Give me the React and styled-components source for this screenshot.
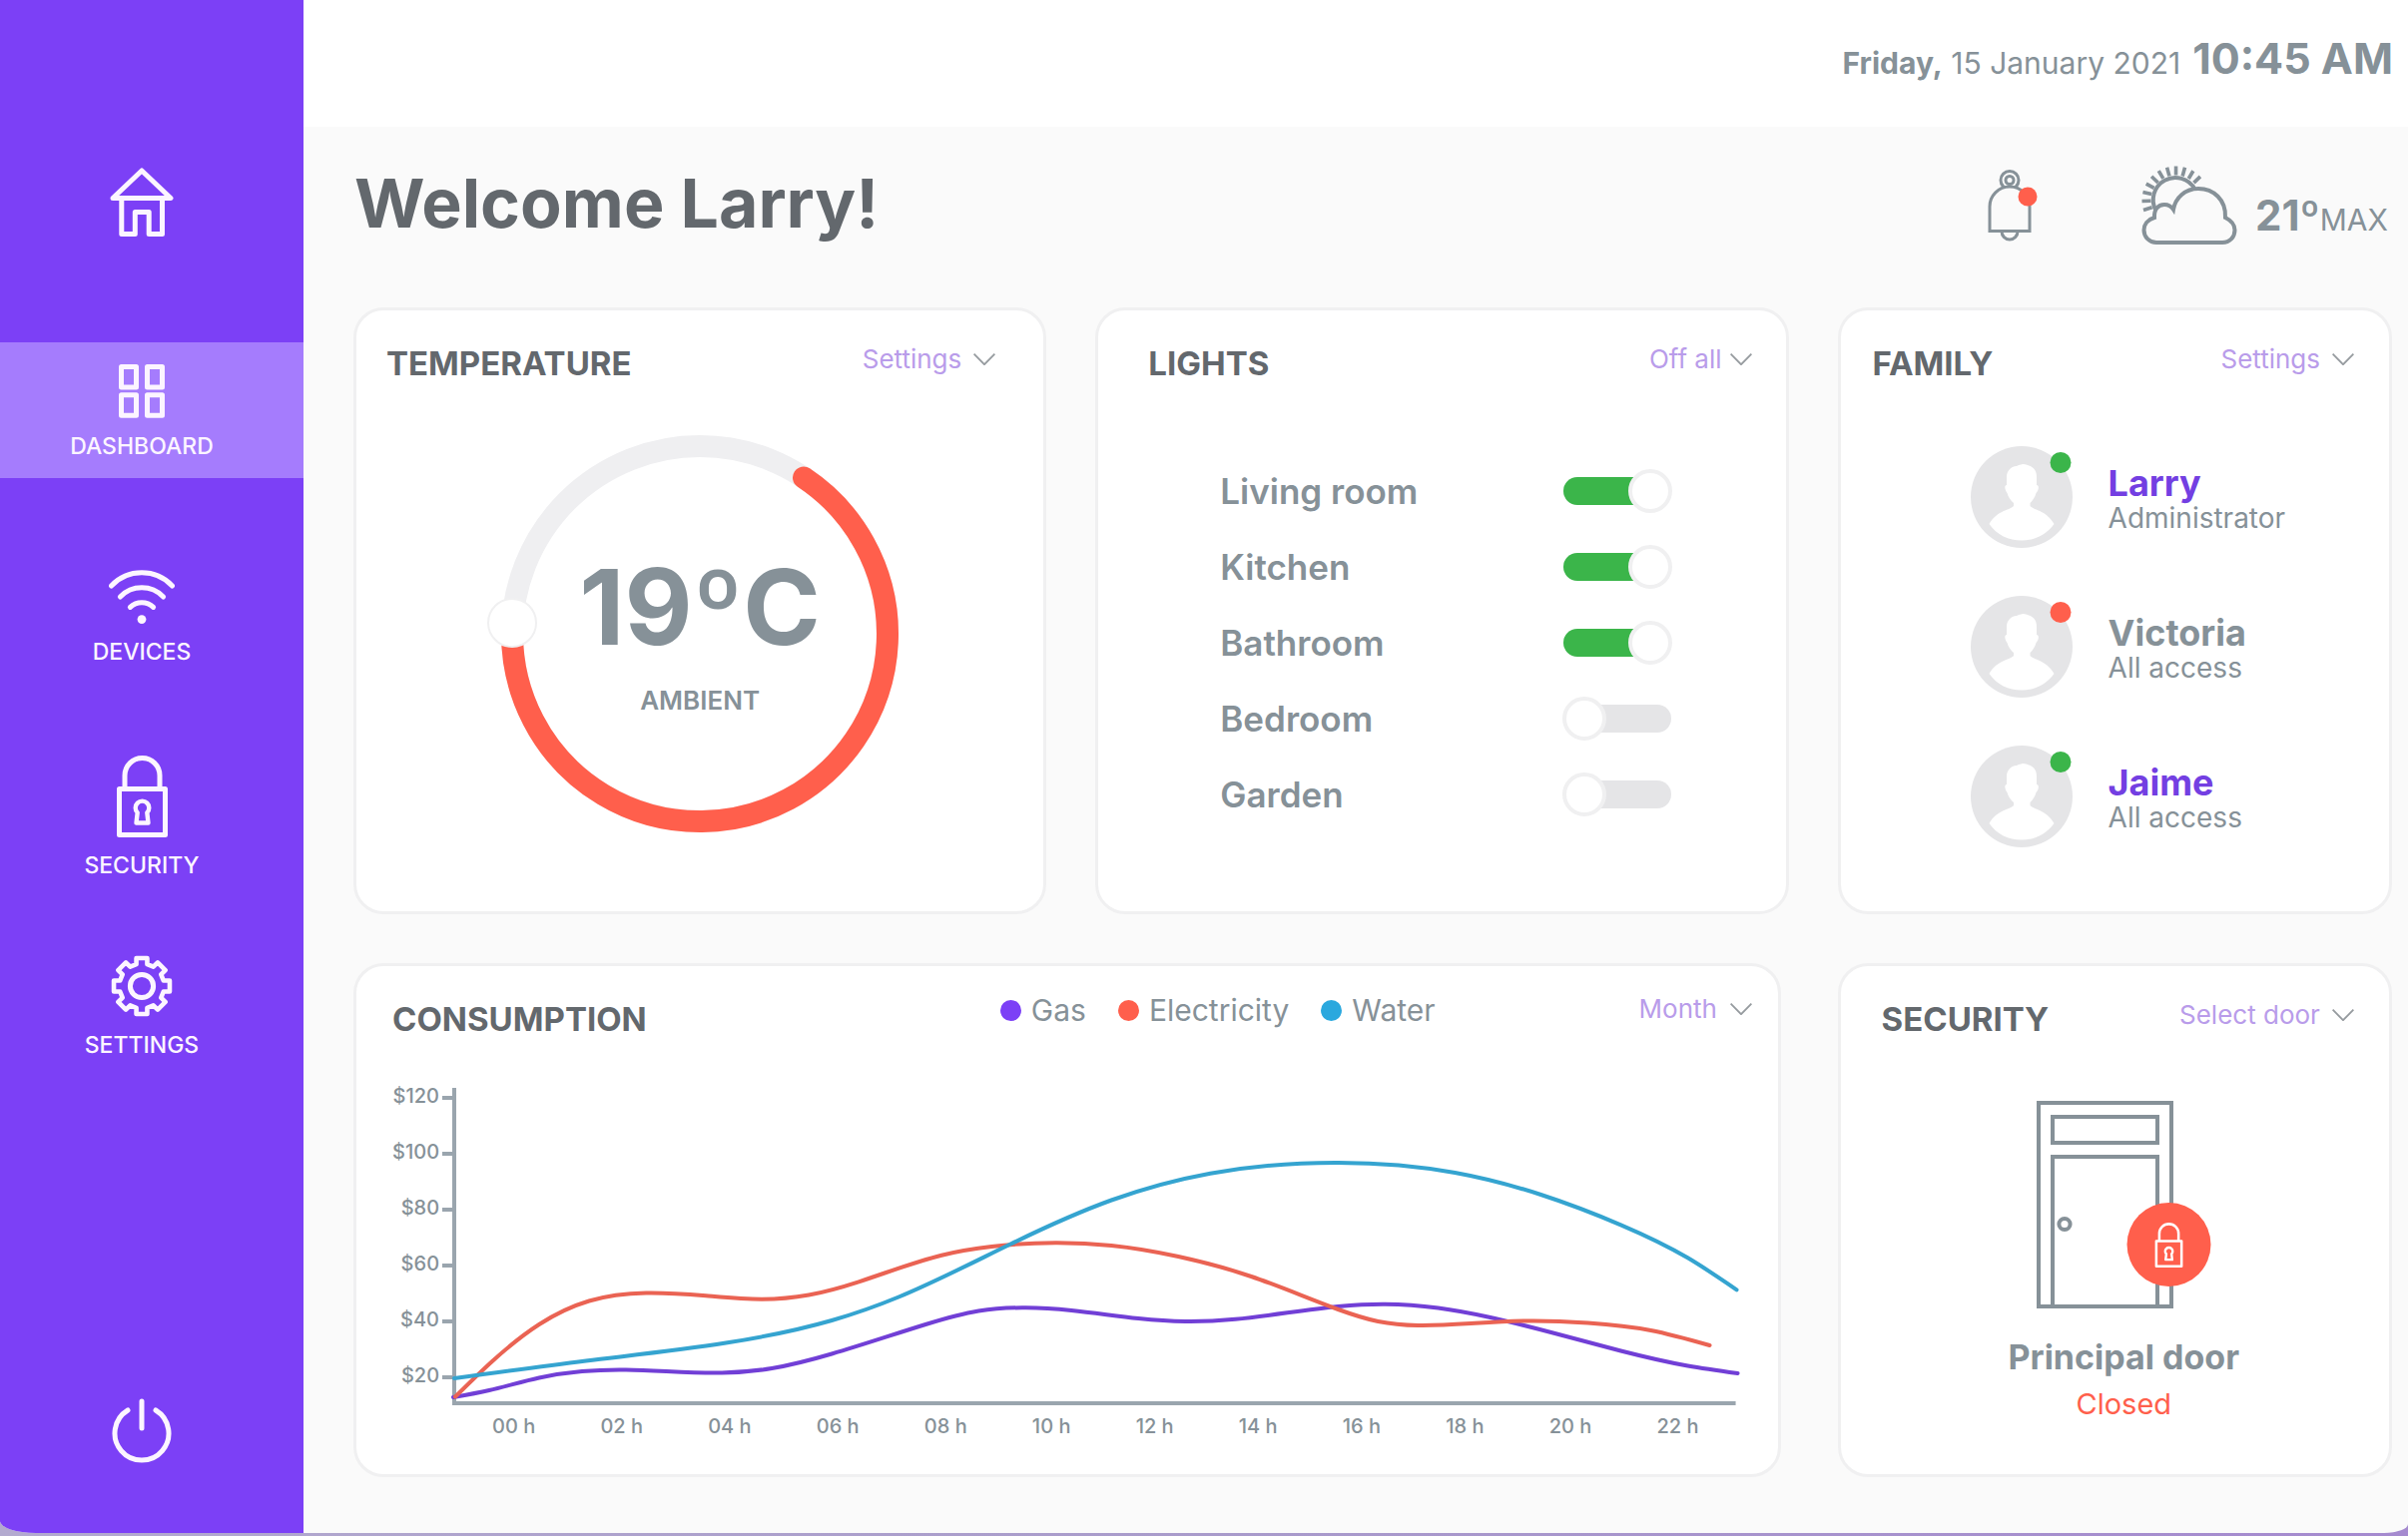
import React, { useState } from "react";
import styled, { createGlobalStyle } from "styled-components";

const color = {
  purple: "#7c40f6",
  purpleText: "#733fe2",
  active: "#a57cfd",
  link: "#b99cea",
  navText: "#fcf5ff",
  red: "#ff5f4c",
  green: "#3bb54a",
  blue: "#2aa8de",
  gray: "#869198",
  dark: "#63686d",
  axis: "#9aa5ae",
  line: "#f0f0f1",
  track: "#e5e5e7",
};

const Global = createGlobalStyle`
  *, *::before, *::after { box-sizing: border-box; }
  body {
    margin: 0;
    background: linear-gradient(90deg, #b3aacf 0%, #a99bcb 50%, #a58acf 100%);
    font-family: Inter, "Noto Sans", "Liberation Sans", sans-serif;
    color: ${color.gray};
  }
  h1, h2, h3, p, ul { margin: 0; padding: 0; }
  ul { list-style: none; }
  button, select, input { font: inherit; margin: 0; }
  svg { display: block; flex: none; }
`;

/* ---------- layout ---------- */

const Frame = styled.div`
  padding-bottom: 3px;
`;

const Shell = styled.div`
  display: flex;
  min-height: calc(100vh - 3px);
  overflow: hidden;
  background: #fafafa;
  border-radius: 0 0 24px 36px / 0 0 9px 12px;
`;

const Sidebar = styled.nav`
  flex: none;
  display: flex;
  flex-direction: column;
  width: 304px;
  padding: 146px 0 48px;
  background: ${color.purple};
`;

const NavItem = styled.a`
  display: flex;
  flex-direction: column;
  align-items: center;
  gap: 16px;
  margin-top: ${(p) => p.$gap || 0}px;
  padding: 22px 20px 20px 0;
  background: ${(p) => (p.$active ? color.active : "transparent")};
  color: ${color.navText};
  font-size: 23px;
  font-weight: 500;
  line-height: 24px;
  text-decoration: none;
`;

const PowerButton = styled.button`
  display: flex;
  justify-content: center;
  margin-top: auto;
  padding: 22px 20px 22px 0;
  border: 0;
  background: none;
  color: ${color.navText};
  cursor: pointer;
`;

const Page = styled.div`
  flex: 1;
  min-width: 0;
  display: flex;
  flex-direction: column;
`;

const TopBar = styled.header`
  display: flex;
  justify-content: flex-end;
  align-items: baseline;
  gap: 12px;
  height: 127px;
  padding: 32px 15px 0 50px;
  background: #ffffff;
  font-size: 30px;
  line-height: 52px;
`;

const Clock = styled.time`
  font-size: 43px;
  font-weight: 700;
`;

const Hero = styled.div`
  display: flex;
  align-items: center;
  height: 152px;
  margin-bottom: 29px;
  padding: 0 20px 0 51px;
`;

const Greeting = styled.h1`
  margin-right: auto;
  color: ${color.dark};
  font-size: 68px;
  font-weight: 700;
  line-height: 80px;
`;

const HeroTools = styled.div`
  display: flex;
  align-items: center;
  gap: 99px;
  padding-top: 6px;
`;

const BellButton = styled.button`
  padding: 4px;
  border: 0;
  background: none;
  cursor: pointer;
`;

const Weather = styled.div`
  display: flex;
  align-items: center;
  gap: 18px;
`;

const Forecast = styled.p`
  padding-top: 24px;
  font-size: 30px;
  line-height: 48px;

  b {
    font-size: 42px;
  }
`;

const Cards = styled.main`
  display: grid;
  grid-template-columns: 5fr 5fr 4fr;
  gap: 49px;
  padding: 0 16px 56px 50px;
`;

const Card = styled.section`
  min-width: 0;
  min-height: ${(p) => (p.$wide || p.$short ? 515 : 608)}px;
  grid-column: ${(p) => (p.$wide ? "span 2" : "auto")};
  margin-right: ${(p) => (p.$wide ? 8 : 0)}px;
  padding: 27px ${(p) => p.$right}px 24px ${(p) => p.$left}px;
  border: 3px solid ${color.line};
  border-radius: 30px;
  background: #ffffff;
`;

const CardHeader = styled.div`
  display: flex;
  align-items: flex-start;
  justify-content: space-between;
`;

const CardTitle = styled.h2`
  padding-top: 6px;
  color: ${color.dark};
  font-size: 33px;
  font-weight: 700;
  line-height: 40px;
`;

/* ---------- controls ---------- */

const MenuButton = styled.button`
  display: flex;
  align-items: center;
  gap: ${(p) => p.$gap || 12}px;
  margin-top: 6px;
  padding: 0;
  border: 0;
  background: none;
  color: ${color.link};
  font-size: 26px;
  line-height: 32px;
  cursor: pointer;
`;

const SelectWrap = styled.label`
  display: flex;
  align-items: center;
  gap: 12px;
  margin-top: ${(p) => (p.$raised ? 0 : 6)}px;
`;

const Select = styled.select`
  appearance: none;
  height: 32px;
  padding: 0;
  border: 0;
  background: none;
  color: ${color.link};
  font-size: 26px;
  line-height: 32px;
  cursor: pointer;
`;

const Toggle = styled.input.attrs({ type: "checkbox", role: "switch" })`
  appearance: none;
  position: relative;
  flex: none;
  width: 110px;
  height: 44px;
  cursor: pointer;

  &::before {
    content: "";
    position: absolute;
    inset: 8px 1px;
    border-radius: 14px;
    background: ${color.track};
  }

  &::after {
    content: "";
    position: absolute;
    top: 0;
    left: 0;
    width: 44px;
    height: 44px;
    border: 4px solid ${color.line};
    border-radius: 50%;
    background: #ffffff;
  }

  &:checked::before {
    background: ${color.green};
    right: 20px;
  }

  &:checked::after {
    left: auto;
    right: 0;
  }
`;

/* ---------- temperature ---------- */

const Dial = styled.div`
  position: relative;
  display: grid;
  place-items: center;
  margin: 52px -18px 0 0;

  > * {
    grid-area: 1 / 1;
  }
`;

const DialInput = styled.input.attrs({ type: "range" })`
  position: absolute;
  inset: 0;
  width: 100%;
  height: 100%;
  opacity: 0;
  cursor: pointer;
`;

const Reading = styled.div`
  display: flex;
  flex-direction: column;
  align-items: center;
  gap: 22px;
  font-size: 26px;
  font-weight: 600;
  line-height: 32px;
`;

const Degrees = styled.output`
  font-size: 105px;
  font-weight: 700;
  line-height: 112px;
`;

/* ---------- lights ---------- */

const LightList = styled.ul`
  margin-top: 70px;
  padding: 0 80px 0 72px;
`;

const LightRow = styled.li`
  display: flex;
  align-items: center;
  justify-content: space-between;
  height: 76px;
  font-size: 35px;
  font-weight: 600;
  line-height: 40px;
`;

/* ---------- family ---------- */

const People = styled.ul`
  display: flex;
  flex-direction: column;
  gap: 48px;
  margin-top: 63px;
  padding-left: 98px;
`;

const Person = styled.li`
  display: flex;
  align-items: center;
  gap: 36px;
`;

const PersonText = styled.div`
  padding-top: 4px;
  font-size: 28px;
  line-height: 32px;
`;

const PersonName = styled.h3`
  color: ${(p) => (p.$online ? color.purpleText : color.gray)};
  font-size: 36px;
  font-weight: 700;
  line-height: 38px;
`;

/* ---------- consumption ---------- */

const Legend = styled.ul`
  display: flex;
  gap: 32px;
  margin: 0 204px 0 auto;
`;

const LegendItem = styled.li`
  display: flex;
  align-items: center;
  gap: 10px;
  font-size: 30px;
  line-height: 34px;

  &::before {
    content: "";
    width: 21px;
    height: 21px;
    border-radius: 50%;
    background: ${(p) => p.$color};
  }
`;

const Chart = styled.div`
  display: grid;
  grid-template-columns: 46px 1fr;
  column-gap: 4px;
  margin-top: 29px;
  padding-right: 12px;
  font-size: 20px;
  font-weight: 500;
  line-height: 24px;
`;

const YLabels = styled.ul`
  display: grid;
  grid-auto-rows: 56px;
  align-items: center;
  justify-items: end;
`;

const Plot = styled.svg`
  width: 100%;
  height: 324px;
  margin-top: 17px;
  overflow: visible;
`;

const XLabels = styled.ul`
  grid-column: 2;
  display: flex;
  justify-content: space-between;
  padding: 6px 41px 0 50px;
`;

/* ---------- security ---------- */

const DoorStatus = styled.div`
  display: flex;
  flex-direction: column;
  align-items: center;
  margin-top: 62px;
  padding-left: 12px;
`;

const DoorName = styled.h3`
  margin-top: 29px;
  font-size: 34px;
  font-weight: 700;
  line-height: 40px;
`;

const DoorState = styled.p`
  margin-top: 11px;
  color: ${color.red};
  font-size: 29px;
  line-height: 32px;
`;

/* ---------- icons ---------- */

const Stroke = ({ w, h, width = 5, children }) => (
  <svg
    width={w}
    height={h}
    viewBox={`0 0 ${w} ${h}`}
    fill="none"
    stroke="currentColor"
    strokeWidth={width}
    strokeLinecap="round"
    strokeLinejoin="round"
    aria-hidden="true"
  >
    {children}
  </svg>
);

const HomeIcon = () => (
  <Stroke w={64} h={69}>
    <path d="M3 30.5 32 3l29 27.5Z" />
    <path d="M11.8 30.5v36h13.5v-22h13.9v22h13.3v-36" />
  </Stroke>
);

const GridIcon = () => (
  <Stroke w={46} h={54}>
    <rect x="2.5" y="2.5" width="15" height="20.5" />
    <rect x="28.5" y="2.5" width="15" height="20.5" />
    <rect x="2.5" y="30.8" width="15" height="20.5" />
    <rect x="28.5" y="30.8" width="15" height="20.5" />
  </Stroke>
);

const WifiIcon = () => (
  <Stroke w={66} h={54}>
    <path d="M2.5 16a42 42 0 0 1 61 0" />
    <path d="M11.4 27a30 30 0 0 1 43.2 0" />
    <path d="M21.4 37.4a16.5 16.5 0 0 1 23.2 0" />
    <circle cx="33" cy="49.6" r="4.4" fill="currentColor" stroke="none" />
  </Stroke>
);

const LockShape = () => (
  <>
    <path d="M8 33.500V20a17.5 17.500 0 0 1 35 0v13.500" />
    <rect x="2.5" y="33.500" width="46" height="46" />
    <path
      strokeWidth="4.400"
      d="M19.500 67.500h12l-1.200-10.300a6.800 6.800 0 1 0-9.600 0Z"
    />
  </>
);

const LockIcon = () => (
  <Stroke w={51} h={82}>
    <LockShape />
  </Stroke>
);

const gearPath = (() => {
  const points = [];
  for (let i = 0; i < 8; i += 1) {
    const mid = i * 45 - 90;
    [
      [-14, 22.5],
      [-11, 28.5],
      [11, 28.5],
      [14, 22.5],
    ].forEach(([offset, r]) => {
      const a = ((mid + offset) * Math.PI) / 180;
      points.push(`${31 + r * Math.cos(a)} ${31 + r * Math.sin(a)}`);
    });
  }
  return `M${points.join("L")}Z`;
})();

const GearIcon = () => (
  <Stroke w={62} h={62}>
    <path d={gearPath} strokeWidth="4.6" />
    <circle cx="31" cy="31" r="11.6" />
  </Stroke>
);

const PowerIcon = () => (
  <Stroke w={60} h={65}>
    <path d="M16 12a27 27 0 1 0 28 0" />
    <path d="M30 3v27" />
  </Stroke>
);

const BellIcon = () => (
  <svg width="52" height="72" viewBox="0 0 52 72" fill="none" aria-hidden="true">
    <g stroke={color.gray} strokeWidth="3">
      <circle cx="23" cy="10.500" r="9" />
      <circle cx="23" cy="10.500" r="4" />
      <path d="M15 62a8 8 0 0 0 16 0" />
      <path d="M3 61.500V37a20 20 0 0 1 40 0v24.500Z" fill="#fafafa" />
    </g>
    <circle cx="41" cy="27" r="9.500" fill={color.red} />
  </svg>
);

const rays = Array.from({ length: 11 }, (_, i) => {
  const a = ((163 + i * 15.3) * Math.PI) / 180;
  const at = (r) => `${34.5 + r * Math.cos(a)} ${34.5 + r * Math.sin(a)}`;
  return `M${at(25)}L${at(34)}`;
}).join("");

const WeatherIcon = () => (
  <svg
    width="96"
    height="80"
    viewBox="0 0 96 80"
    fill="none"
    stroke={color.gray}
    strokeWidth="4"
    role="img"
    aria-label="Partly cloudy"
  >
    <path d={rays} strokeWidth="3.600" />
    <path d="M14.500 45a22 22 0 1 1 39-21.500" />
    <path d="M13 52c-.5-8 3.500-13 10-13 4 0 7 2 9 5 2-12 12-21 25-21 15 0 28 11 27 29 6 3 9.500 7 9.500 12.500 0 7-5 12.500-12.500 12.500H15C8 77 2.500 71.500 2.500 64.500 2.500 59 6 54 13 52Z" />
  </svg>
);

const Chevron = () => (
  <svg
    width="22"
    height="12"
    viewBox="0 0 22 12"
    fill="none"
    stroke="#969b9f"
    strokeWidth="1.800"
    aria-hidden="true"
  >
    <path d="M.6.6 11 11.200 21.400.6" />
  </svg>
);

const Avatar = ({ online }) => (
  <svg
    width="102"
    height="102"
    viewBox="0 0 102 102"
    overflow="visible"
    role="img"
    aria-label={online ? "At home" : "Away"}
  >
    <circle cx="51" cy="51" r="51" fill={color.track} />
    <path
      fill="#fff"
      d="M52 18C60 19 66 22 66 31v8c3 0 2 6-.5 8-1 4-3.500 7.500-6 10v3c3 4 16 4 24 18-8 11-19.500 16.500-32.500 16.500S26 89 18.500 78c8-14 21.500-14 24.500-18v-3c-3-2.500-5.500-6-6.500-10-2-2-3.500-8-.5-8v-8c0-6 4-10.500 10-11 2-1.500 4-1 6-2Z"
    />
    <circle cx="90" cy="16.500" r="10.500" fill={online ? color.green : color.red} />
  </svg>
);

const DoorDrawing = () => (
  <svg width="175" height="208" viewBox="0 0 175 208" fill="none" aria-hidden="true">
    <g stroke={color.gray} strokeWidth="4">
      <path d="M2 2h133v204H2z" />
      <path d="M16 16h105v26H16z" />
      <path d="M16 206V56h105v150" />
      <circle cx="28" cy="123.500" r="5.600" />
    </g>
    <circle cx="132.500" cy="144" r="42" fill={color.red} />
    <g
      transform="translate(118.500 122) scale(.55)"
      stroke="#fff"
      strokeWidth="4.600"
      strokeLinejoin="round"
    >
      <LockShape />
    </g>
  </svg>
);

const Ring = () => (
  <svg width="424" height="398" viewBox="0 0 424 398" fill="none" overflow="visible" aria-hidden="true">
    <circle cx="212" cy="199" r="188" stroke="#efeff1" strokeWidth="22" />
    <path
      d="M24 199a188 188 0 1 0 292-156.500"
      stroke={color.red}
      strokeWidth="22"
      strokeLinecap="round"
    />
    <circle cx="24" cy="188" r="24" fill="#fff" stroke={color.line} strokeWidth="2" />
  </svg>
);

/* ---------- chart data ---------- */

const series = [
  {
    name: "Gas",
    color: color.purple,
    line: "#713fd6",
    points: [[11, 313], [47, 306], [97, 293.5], [140, 287], [184, 285.5], [280, 288.5], [330, 284], [390, 269.5], [484, 240], [537, 226.5], [584, 223.3], [630, 226], [697, 234], [744, 237], [794, 234.8], [897, 222], [944, 219.7], [997, 223.5], [1047, 232.5], [1114, 249], [1180, 266.5], [1247, 281.5], [1297, 289]],
  },
  {
    name: "Electricity",
    color: color.red,
    line: "#ea6353",
    points: [[13, 312.5], [50, 277], [97, 240], [147, 216.5], [204, 208.5], [264, 211.3], [320, 214.7], [367, 210.5], [417, 197.3], [500, 170.7], [550, 162], [614, 158.3], [670, 161], [737, 172], [810, 192], [897, 225], [937, 237], [977, 241], [1034, 238.8], [1087, 236.5], [1147, 238.5], [1210, 246], [1269, 261]],
  },
  {
    name: "Water",
    color: color.blue,
    line: "#35a4d0",
    points: [[12, 294], [144, 276.5], [284, 258.5], [390, 236], [457, 212.5], [569, 159.5], [670, 115.5], [769, 88.7], [897, 78], [1014, 88], [1100, 110], [1180, 140.3], [1247, 173.3], [1296, 205.3]],
  },
];

/* Natural cubic spline: relax the slope at each point until curvature is continuous. */
const smooth = (pts) => {
  const last = pts.length - 1;
  const span = pts.slice(1).map((p, i) => p[0] - pts[i][0]);
  const rise = pts.slice(1).map((p, i) => (p[1] - pts[i][1]) / span[i]);
  const slope = pts.map((_, i) => rise[Math.min(i, last - 1)]);
  for (let pass = 0; pass < 40; pass += 1) {
    slope[0] = (3 * rise[0] - slope[1]) / 2;
    for (let i = 1; i < last; i += 1) {
      const a = 1 / span[i - 1];
      const b = 1 / span[i];
      slope[i] =
        (3 * (rise[i - 1] * a + rise[i] * b) - slope[i - 1] * a - slope[i + 1] * b) /
        (2 * (a + b));
    }
    slope[last] = (3 * rise[last - 1] - slope[last - 1]) / 2;
  }
  return pts.slice(1).reduce((d, [x, y], i) => {
    const [px, py] = pts[i];
    const t = span[i] / 3;
    return `${d}C${px + t} ${py + t * slope[i]} ${x - t} ${y - t * slope[i + 1]} ${x} ${y}`;
  }, `M${pts[0][0]} ${pts[0][1]}`);
};

const costs = ["$120", "$100", "$80", "$60", "$40", "$20"];
const hours = ["00", "02", "04", "06", "08", "10", "12", "14", "16", "18", "20", "22"];

const family = [
  { name: "Larry", role: "Administrator", online: true },
  { name: "Victoria", role: "All access", online: false },
  { name: "Jaime", role: "All access", online: true },
];

/* ---------- cards ---------- */

function TemperatureCard() {
  const [degrees, setDegrees] = useState(19);
  return (
    <Card $left={30} $right={48}>
      <CardHeader>
        <CardTitle>TEMPERATURE</CardTitle>
        <MenuButton type="button" aria-haspopup="menu">
          Settings <Chevron />
        </MenuButton>
      </CardHeader>
      <Dial>
        <Ring />
        <Reading>
          <Degrees>{degrees}ºC</Degrees>
          AMBIENT
        </Reading>
        <DialInput
          aria-label="Ambient temperature"
          min="5"
          max="35"
          value={degrees}
          onChange={(e) => setDegrees(Number(e.target.value))}
        />
      </Dial>
    </Card>
  );
}

function LightsCard() {
  const [lights, setLights] = useState({
    "Living room": true,
    Kitchen: true,
    Bathroom: true,
    Bedroom: false,
    Garden: false,
  });
  return (
    <Card $left={50} $right={34}>
      <CardHeader>
        <CardTitle>LIGHTS</CardTitle>
        <MenuButton type="button" aria-haspopup="menu" $gap={8}>
          Off all <Chevron />
        </MenuButton>
      </CardHeader>
      <LightList>
        {Object.entries(lights).map(([room, on]) => {
          const id = `light-${room.toLowerCase().replace(" ", "-")}`;
          return (
            <LightRow key={room}>
              <label htmlFor={id}>{room}</label>
              <Toggle
                id={id}
                checked={on}
                onChange={() => setLights({ ...lights, [room]: !on })}
              />
            </LightRow>
          );
        })}
      </LightList>
    </Card>
  );
}

function FamilyCard() {
  return (
    <Card $left={32} $right={35}>
      <CardHeader>
        <CardTitle>FAMILY</CardTitle>
        <MenuButton type="button" aria-haspopup="menu">
          Settings <Chevron />
        </MenuButton>
      </CardHeader>
      <People>
        {family.map((person) => (
          <Person key={person.name}>
            <Avatar online={person.online} />
            <PersonText>
              <PersonName $online={person.online}>{person.name}</PersonName>
              <p>{person.role}</p>
            </PersonText>
          </Person>
        ))}
      </People>
    </Card>
  );
}

function ConsumptionCard() {
  return (
    <Card $wide $left={36} $right={26}>
      <CardHeader>
        <CardTitle>CONSUMPTION</CardTitle>
        <Legend>
          {series.map((s) => (
            <LegendItem key={s.name} $color={s.color}>
              {s.name}
            </LegendItem>
          ))}
        </Legend>
        <SelectWrap $raised>
          <Select aria-label="Period" defaultValue="Month">
            <option>Day</option>
            <option>Week</option>
            <option>Month</option>
          </Select>
          <Chevron />
        </SelectWrap>
      </CardHeader>
      <Chart>
        <YLabels>
          {costs.map((c) => (
            <li key={c}>{c}</li>
          ))}
        </YLabels>
        <Plot
          viewBox="0 0 1299 324"
          preserveAspectRatio="none"
          fill="none"
          strokeWidth="4"
          role="img"
          aria-label="Gas, electricity and water cost by hour"
        >
          <path d="M12 3v316h1283" stroke={color.axis} />
          {costs.map((c, i) => (
            <path key={c} d={`M0 ${13 + i * 56}h12`} stroke={color.axis} />
          ))}
          {series.map((s) => (
            <path key={s.name} d={smooth(s.points)} stroke={s.line} strokeLinecap="round" />
          ))}
        </Plot>
        <XLabels>
          {hours.map((h) => (
            <li key={h}>{h} h</li>
          ))}
        </XLabels>
      </Chart>
    </Card>
  );
}

function SecurityCard() {
  return (
    <Card $short $left={41} $right={35}>
      <CardHeader>
        <CardTitle>SECURITY</CardTitle>
        <SelectWrap>
          <Select aria-label="Door" defaultValue="Select door">
            <option>Select door</option>
            <option>Principal</option>
            <option>Garage</option>
          </Select>
          <Chevron />
        </SelectWrap>
      </CardHeader>
      <DoorStatus>
        <DoorDrawing />
        <DoorName>Principal door</DoorName>
        <DoorState>Closed</DoorState>
      </DoorStatus>
    </Card>
  );
}

export default function App() {
  return (
    <Frame>
      <Global />
      <Shell>
        <Sidebar aria-label="Main">
          <NavItem href="#home" aria-label="Home">
            <HomeIcon />
          </NavItem>
          <NavItem href="#dashboard" $active $gap={86} aria-current="page">
            <GridIcon />
            DASHBOARD
          </NavItem>
          <NavItem href="#devices" $gap={70}>
            <WifiIcon />
            DEVICES
          </NavItem>
          <NavItem href="#security" $gap={50}>
            <LockIcon />
            SECURITY
          </NavItem>
          <NavItem href="#settings" $gap={36}>
            <GearIcon />
            SETTINGS
          </NavItem>
          <PowerButton type="button" aria-label="Turn off">
            <PowerIcon />
          </PowerButton>
        </Sidebar>
        <Page>
          <TopBar>
            <span>
              <b>Friday,</b> 15 January 2021
            </span>
            <Clock dateTime="10:45">10:45 AM</Clock>
          </TopBar>
          <Hero>
            <Greeting>Welcome Larry!</Greeting>
            <HeroTools>
              <BellButton type="button" aria-label="Notifications">
                <BellIcon />
              </BellButton>
              <Weather>
                <WeatherIcon />
                <Forecast>
                  <b>21º</b>MAX
                </Forecast>
              </Weather>
            </HeroTools>
          </Hero>
          <Cards>
            <TemperatureCard />
            <LightsCard />
            <FamilyCard />
            <ConsumptionCard />
            <SecurityCard />
          </Cards>
        </Page>
      </Shell>
    </Frame>
  );
}
